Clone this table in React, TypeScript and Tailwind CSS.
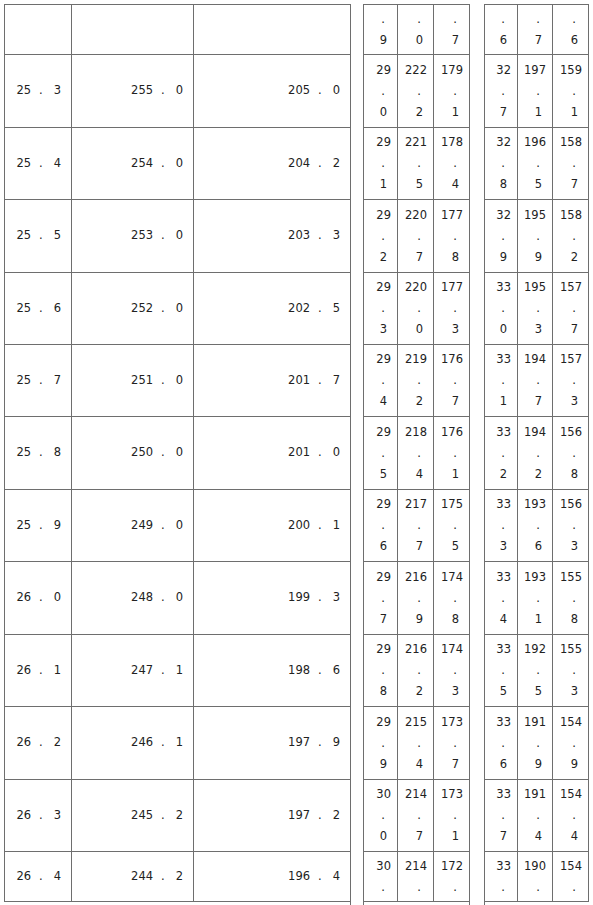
import React from "react";

const rowHeights = [50, 73, 72, 73, 72, 72, 73, 72, 73, 72, 73, 72, 50];

const left: [string, string][][] = [
  [["", ""], ["", ""], ["", ""]],
  [["25", "3"], ["255", "0"], ["205", "0"]],
  [["25", "4"], ["254", "0"], ["204", "2"]],
  [["25", "5"], ["253", "0"], ["203", "3"]],
  [["25", "6"], ["252", "0"], ["202", "5"]],
  [["25", "7"], ["251", "0"], ["201", "7"]],
  [["25", "8"], ["250", "0"], ["201", "0"]],
  [["25", "9"], ["249", "0"], ["200", "1"]],
  [["26", "0"], ["248", "0"], ["199", "3"]],
  [["26", "1"], ["247", "1"], ["198", "6"]],
  [["26", "2"], ["246", "1"], ["197", "9"]],
  [["26", "3"], ["245", "2"], ["197", "2"]],
  [["26", "4"], ["244", "2"], ["196", "4"]],
];

type V = [string | null, string | null];
const g1: V[][] = [
  [[null, "9"], [null, "0"], [null, "7"]],
  [["29", "0"], ["222", "2"], ["179", "1"]],
  [["29", "1"], ["221", "5"], ["178", "4"]],
  [["29", "2"], ["220", "7"], ["177", "8"]],
  [["29", "3"], ["220", "0"], ["177", "3"]],
  [["29", "4"], ["219", "2"], ["176", "7"]],
  [["29", "5"], ["218", "4"], ["176", "1"]],
  [["29", "6"], ["217", "7"], ["175", "5"]],
  [["29", "7"], ["216", "9"], ["174", "8"]],
  [["29", "8"], ["216", "2"], ["174", "3"]],
  [["29", "9"], ["215", "4"], ["173", "7"]],
  [["30", "0"], ["214", "7"], ["173", "1"]],
  [["30", null], ["214", null], ["172", null]],
];
const g2: V[][] = [
  [[null, "6"], [null, "7"], [null, "6"]],
  [["32", "7"], ["197", "1"], ["159", "1"]],
  [["32", "8"], ["196", "5"], ["158", "7"]],
  [["32", "9"], ["195", "9"], ["158", "2"]],
  [["33", "0"], ["195", "3"], ["157", "7"]],
  [["33", "1"], ["194", "7"], ["157", "3"]],
  [["33", "2"], ["194", "2"], ["156", "8"]],
  [["33", "3"], ["193", "6"], ["156", "3"]],
  [["33", "4"], ["193", "1"], ["155", "8"]],
  [["33", "5"], ["192", "5"], ["155", "3"]],
  [["33", "6"], ["191", "9"], ["154", "9"]],
  [["33", "7"], ["191", "4"], ["154", "4"]],
  [["33", null], ["190", null], ["154", null]],
];

function LeftVal({ v }: { v: [string, string] }) {
  if (!v[0]) return null;
  return (
    <span className="whitespace-nowrap">
      <span>{v[0]}</span>
      <span className="ml-[8px] mr-[11px]">.</span>
      <span>{v[1]}</span>
    </span>
  );
}

function StackVal({ v }: { v: V }) {
  return (
    <div className="flex flex-col items-end leading-[21px]">
      {v[0] !== null && <div className="pr-[6px]">{v[0]}</div>}
      <div className="pr-[12px]">.</div>
      {v[1] !== null && <div className="pr-[10px]">{v[1]}</div>}
    </div>
  );
}

const B = "border-[#6e6e6e]";

function Group({ data, widths, lastBorder }: { data: V[][]; widths: string[]; lastBorder: boolean }) {
  return (
    <div className={`flex flex-col border-t ${B}`}>
      {data.map((row, i) => (
        <div key={i} className={`flex border-b ${B}`} style={{ height: rowHeights[i] }}>
          {row.map((v, j) => (
            <div
              key={j}
              className={`${widths[j]} flex items-center justify-end ${j < 2 || lastBorder ? `border-r ${B}` : ""}`}
            >
              <StackVal v={v} />
            </div>
          ))}
        </div>
      ))}
    </div>
  );
}

export default function App() {
  const lw = ["w-[67px] border-r", "w-[122px] border-r", "w-[156px]"];
  return (
    <div
      className="h-[905px] w-[593px] overflow-hidden bg-white pl-[4px] pt-[4px] text-[11.5px] text-[#222]"
      style={{ fontFamily: '"DejaVu Sans", "Noto Sans CJK KR", sans-serif' }}
    >
      <div className="flex h-full items-start">
        <div className={`flex flex-col border-l border-t ${B}`}>
          {left.map((row, i) => (
            <div key={i} className={`flex border-b ${B}`} style={{ height: rowHeights[i] }}>
              {row.map((v, j) => (
                <div key={j} className={`${lw[j]} ${B} flex items-center justify-end pr-[10px]`}>
                  <LeftVal v={v} />
                </div>
              ))}
            </div>
          ))}
        </div>
        <div className={`w-[14px] self-stretch border-l border-r ${B}`} />
        <Group data={g1} widths={["w-[34px]", "w-[36px]", "w-[35px]"]} lastBorder={false} />
        <div className={`w-[16px] self-stretch border-l border-r ${B}`} />
        <Group data={g2} widths={["w-[33px]", "w-[35px]", "w-[36px]"]} lastBorder={true} />
      </div>
    </div>
  );
}
